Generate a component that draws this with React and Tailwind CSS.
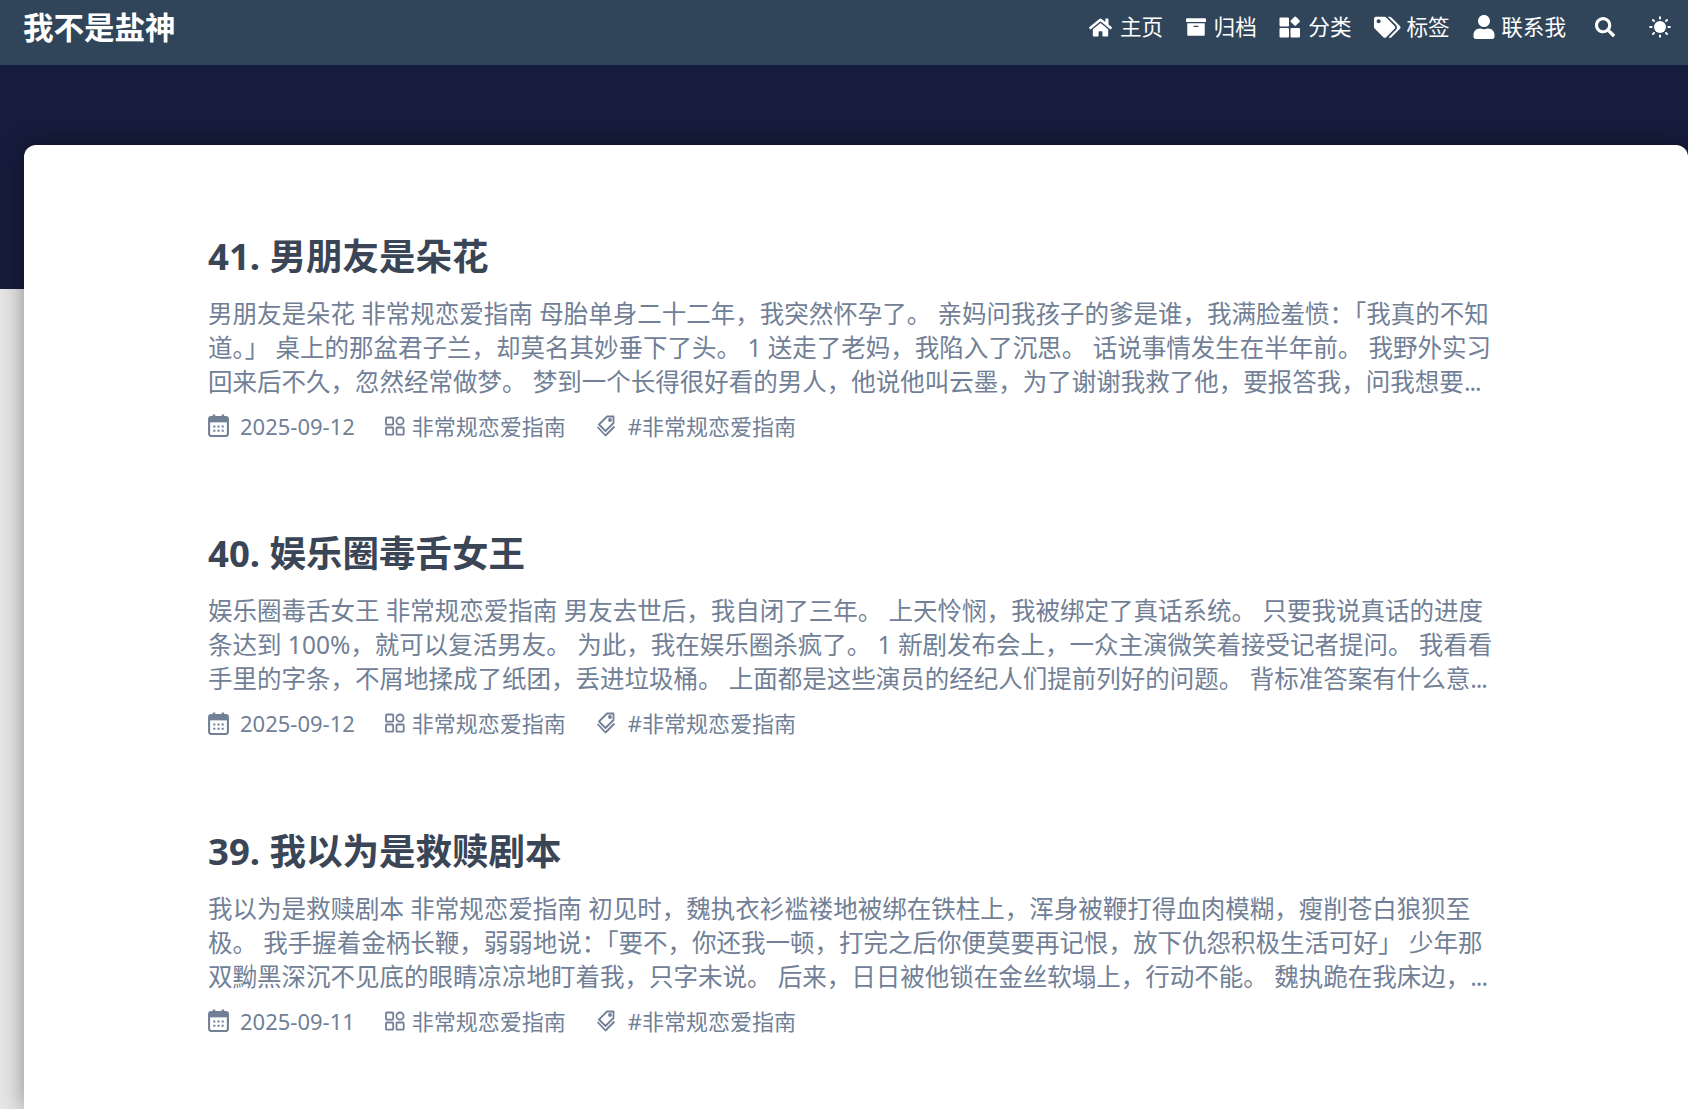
import React from 'react';
import { FaHome, FaArchive, FaTags, FaUser, FaSearch } from 'react-icons/fa';

const sans = 'font-["Noto_Sans","Noto_Sans_CJK_SC",sans-serif]';

const GridIcon = ({ className }) => (
  <svg viewBox="0 0 22 22" fill="currentColor" width="22" height="22" className={className}>
    <rect x="0.5" y="1.5" width="9.5" height="9" rx="1" />
    <rect x="0.5" y="12" width="9.5" height="9.5" rx="1" />
    <rect x="11.5" y="12" width="9.5" height="9.5" rx="1" />
    <rect x="12.6" y="1.6" width="7.2" height="7.2" rx="1" transform="rotate(45 16.2 5.2)" />
  </svg>
);

const SunIcon = ({ className }) => (
  <svg viewBox="0 0 22 22" fill="none" stroke="currentColor" strokeWidth="2" strokeLinecap="round" width="22" height="22" className={className}>
    <circle cx="11" cy="11" r="6" fill="currentColor" stroke="none" />
    <path d="M11 1.2v1.4M11 19.4v1.4M1.2 11h1.4M19.4 11h1.4M4 4l1 1M17 17l1 1M4 18l1-1M17 5l1-1" />
  </svg>
);

const navItems = [
  { label: '主页', Icon: FaHome, icon: 'text-[23px]', gap: 'gap-2' },
  { label: '归档', Icon: FaArchive, icon: 'text-[20px]', gap: 'gap-2' },
  { label: '分类', Icon: GridIcon, icon: '', gap: 'gap-[7px]' },
  { label: '标签', Icon: FaTags, icon: 'text-[26.5px]', gap: 'gap-[6px]' },
  { label: '联系我', Icon: FaUser, icon: 'text-[24px]', gap: 'gap-[5px]' },
];

const posts = [
  {
    title: '41. 男朋友是朵花',
    lines: [
      '男朋友是朵花 非常规恋爱指南 母胎单身二十二年，我突然怀孕了。 亲妈问我孩子的爹是谁，我满脸羞愤：「我真的不知',
      '道。」 桌上的那盆君子兰，却莫名其妙垂下了头。 1 送走了老妈，我陷入了沉思。 话说事情发生在半年前。 我野外实习',
      '回来后不久，忽然经常做梦。 梦到一个长得很好看的男人，他说他叫云墨，为了谢谢我救了他，要报答我，问我想要',
    ],
    date: '2025-09-12',
  },
  {
    title: '40. 娱乐圈毒舌女王',
    lines: [
      '娱乐圈毒舌女王 非常规恋爱指南 男友去世后，我自闭了三年。 上天怜悯，我被绑定了真话系统。 只要我说真话的进度',
      '条达到 100%，就可以复活男友。 为此，我在娱乐圈杀疯了。 1 新剧发布会上，一众主演微笑着接受记者提问。 我看看',
      '手里的字条，不屑地揉成了纸团，丢进垃圾桶。 上面都是这些演员的经纪人们提前列好的问题。 背标准答案有什么意',
    ],
    date: '2025-09-12',
  },
  {
    title: '39. 我以为是救赎剧本',
    lines: [
      '我以为是救赎剧本 非常规恋爱指南 初见时，魏执衣衫褴褛地被绑在铁柱上，浑身被鞭打得血肉模糊，瘦削苍白狼狈至',
      '极。 我手握着金柄长鞭，弱弱地说：「要不，你还我一顿，打完之后你便莫要再记恨，放下仇怨积极生活可好」 少年那',
      '双黝黑深沉不见底的眼睛凉凉地盯着我，只字未说。 后来，日日被他锁在金丝软塌上，行动不能。 魏执跪在我床边，',
    ],
    date: '2025-09-11',
  },
];

const CalendarIcon = () => (
  <svg width="21" height="23" viewBox="0 0 20 22" fill="none" className="shrink-0">
    <rect x="1" y="3" width="18" height="18" rx="2" fill="none" stroke="currentColor" strokeWidth="2" />
    <rect x="1" y="3" width="18" height="5" fill="currentColor" />
    <rect x="4.5" y="0.5" width="2.4" height="4" fill="currentColor" />
    <rect x="13" y="0.5" width="2.4" height="4" fill="currentColor" />
    <path d="M5 11h2v2H5zM9 11h2v2H9zM13 11h2v2h-2zM5 15h2v2H5zM9 15h2v2H9zM13 15h2v2h-2z" fill="currentColor" />
  </svg>
);

const CategoryIcon = () => (
  <svg width="20" height="20" viewBox="0 0 20 20" fill="none" stroke="currentColor" strokeWidth="1.8" className="shrink-0">
    <rect x="1" y="1.5" width="7.2" height="7.2" rx="1" />
    <rect x="1" y="11.5" width="7.2" height="7.2" rx="1" />
    <rect x="11.5" y="11.5" width="7.2" height="7.2" rx="1" />
    <circle cx="15" cy="5.1" r="3.6" />
  </svg>
);

const TagIcon = () => (
  <svg width="20" height="22" viewBox="0 0 20 22" fill="none" stroke="currentColor" strokeWidth="1.8" strokeLinejoin="round" className="shrink-0">
    <path d="M11 1.5h6.5V8L9.5 16 3 9.5z" />
    <circle cx="14" cy="5" r="1" />
    <path d="M1.5 12 9.5 20.5 18.5 11.5" />
  </svg>
);

const PostCard = ({ post }) => (
  <article className="flex flex-col">
    <h2 className="text-[36.5px] leading-[50px] font-bold text-[#3a4556]">{post.title}</h2>
    <p className="mt-4 text-[24.5px] leading-[34px] text-[#718096] whitespace-nowrap">
      {post.lines.map((line, i) => (
        <span key={line} className="block">
          {line}
          {i === 2 && <span className="tracking-[-1px]">...</span>}
        </span>
      ))}
    </p>
    <div className="mt-3 flex items-center text-[22px] leading-[30px] text-[#718096]">
      <span className="flex items-center gap-[11px] mr-[30px]">
        <CalendarIcon />
        {post.date}
      </span>
      <span className="flex items-center gap-[7px] mr-[30px]">
        <CategoryIcon />
        非常规恋爱指南
      </span>
      <span className="flex items-center gap-[12px]">
        <TagIcon />
        #非常规恋爱指南
      </span>
    </div>
  </article>
);

export default function App() {
  return (
    <div className={`${sans} h-[1109px] overflow-hidden bg-[#e6e6e6]`}>
      <header className="h-[65px] bg-[#31455a] flex items-center justify-between pl-[23px] pr-[17px] pb-[11px] text-white">
        <div className="text-[30.5px] font-bold leading-none">我不是盐神</div>
        <nav className="flex items-center gap-[22.5px] text-[21.6px] leading-none">
          {navItems.map(({ label, Icon, icon, gap }) => (
            <a key={label} className={`flex items-center ${gap}`}>
              <Icon className={icon} />
              {label}
            </a>
          ))}
          <FaSearch className="text-[20px] ml-[6.5px]" />
          <SunIcon className="ml-[11.5px]" />
        </nav>
      </header>
      <div className="h-[224px] bg-[#161c3c]" />
      <main className="-mt-[144px] ml-6 h-[964px] bg-white rounded-t-xl pt-[85.5px] pl-[184px] shadow-[0_0_24px_rgba(0,0,0,0.4)]">
        <div className="flex flex-col gap-[87.5px]">
          {posts.map((post) => (
            <PostCard key={post.title} post={post} />
          ))}
        </div>
      </main>
    </div>
  );
}
